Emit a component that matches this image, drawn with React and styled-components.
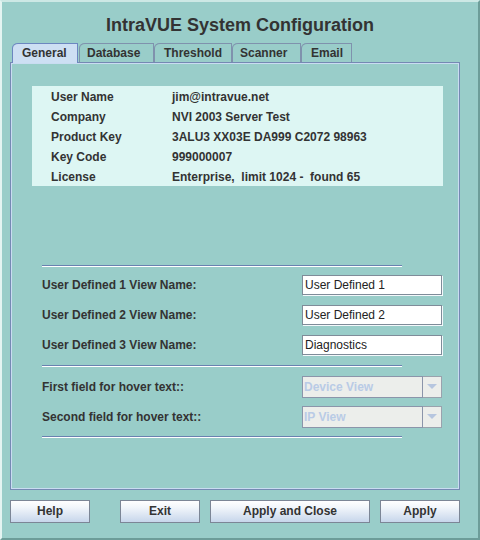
import styled, { createGlobalStyle } from "styled-components";

const GlobalStyle = createGlobalStyle`
  html, body {
    margin: 0;
    padding: 0;
    background: #99cdc9;
  }
  * {
    box-sizing: border-box;
  }
`;

const Frame = styled.div`
  width: 480px;
  height: 540px;
  background: #99cdc9;
  border-top: 2px solid #cde8e5;
  border-left: 2px solid #e4f4f2;
  border-right: 2px solid #6d9d99;
  border-bottom: 2px solid #6d9d99;
  padding: 0 18px 0 8px;
  font-family: "Liberation Sans", Arial, sans-serif;
  color: #333333;
  display: flex;
  flex-direction: column;
`;

const Title = styled.h1`
  margin: 0;
  height: 41px;
  padding-top: 12px;
  font-size: 18px;
  line-height: 22px;
  font-weight: bold;
  text-align: center;
  padding-left: 10px;
`;

const TabRow = styled.div`
  display: flex;
  height: 19px;
  padding-left: 2px;
  position: relative;
  z-index: 1;
`;

const Tab = styled.div`
  width: ${(p) => p.w}px;
  height: ${(p) => (p.active ? 20 : 19)}px;
  margin-right: ${(p) => p.gap || 0}px;
  border: 1px solid ${(p) => (p.active ? "#6c87c0" : "#7f92ad")};
  border-bottom: none;
  border-top-left-radius: 6px 5px;
  background: ${(p) => (p.active ? "#cddff3" : "#99cdc9")};
  font-size: 12px;
  font-weight: bold;
  line-height: 18px;
  padding-left: ${(p) => p.pad}px;
  white-space: nowrap;
`;

const Panel = styled.div`
  width: 450px;
  height: 428px;
  border: 1px solid #7589b3;
  box-shadow: inset 0 0 0 1px #c9dcf1;
  padding: 23px 16px 0 21px;
  display: flex;
  flex-direction: column;
`;

const InfoBox = styled.div`
  width: 411px;
  height: 100px;
  background: #ddf6f3;
  padding: 2px 0 0 19px;
`;

const InfoRow = styled.div`
  display: flex;
  height: 20px;
  line-height: 19px;
  font-size: 12px;
  font-weight: bold;
  white-space: pre;
`;

const InfoLabel = styled.span`
  width: 121px;
`;

const Form = styled.div`
  margin-top: 79px;
  margin-left: 10px;
  width: 400px;
  display: flex;
  flex-direction: column;
`;

const Separator = styled.div`
  width: 360px;
  height: 2px;
  border-top: 1px solid #6a82b0;
  border-bottom: 1px solid #ffffff;
  margin-top: ${(p) => p.top}px;
  margin-bottom: ${(p) => p.bottom}px;
`;

const FieldRow = styled.div`
  display: flex;
  align-items: center;
  justify-content: space-between;
  height: ${(p) => p.h}px;
  margin-bottom: ${(p) => p.gap}px;
  font-size: 12px;
  font-weight: bold;
`;

const TextField = styled.div`
  width: 140px;
  height: 20px;
  background: #ffffff;
  border: 1px solid #7f8c99;
  box-shadow: 1px 1px 0 #f4f8fb;
  font-size: 12px;
  font-weight: normal;
  line-height: 18px;
  padding-left: 2px;
  color: #222222;
`;

const Combo = styled.div`
  width: 140px;
  height: 22px;
  display: flex;
  border: 1px solid #9aa2ad;
  background: #eceeeb;
`;

const ComboValue = styled.div`
  flex: 1;
  border: 1px solid #8b95aa;
  margin: -1px 0 -1px -1px;
  color: #b9cbe6;
  font-size: 12px;
  font-weight: bold;
  line-height: 20px;
  padding-left: 1px;
`;

const ComboArrow = styled.div`
  width: 18px;
  display: flex;
  align-items: center;
  justify-content: center;
`;

const ButtonBar = styled.div`
  display: flex;
  margin-top: 10px;
`;

const Button = styled.div`
  width: ${(p) => p.w}px;
  height: 23px;
  margin-right: ${(p) => p.gap}px;
  border: 1px solid #7c8696;
  background: linear-gradient(#ffffff 0%, #f2f6fb 30%, #c7d6eb 100%);
  font-size: 12px;
  font-weight: bold;
  line-height: 21px;
  text-align: center;
`;

const info = [
  ["User Name", "jim@intravue.net"],
  ["Company", "NVI 2003 Server Test"],
  ["Product Key", "3ALU3 XX03E DA999 C2072 98963"],
  ["Key Code", "999000007"],
  ["License", "Enterprise,  limit 1024 -  found 65"],
];

const tabs = [
  { label: "General", w: 66, pad: 9, gap: 1, active: true },
  { label: "Database", w: 75, pad: 7, gap: 0 },
  { label: "Threshold", w: 78, pad: 9, gap: 0 },
  { label: "Scanner", w: 69, pad: 7, gap: 0 },
  { label: "Email", w: 51, pad: 9, gap: 0 },
];

function Arrow() {
  return (
    <svg width="10" height="6" viewBox="0 0 10 6">
      <path d="M0 0 H10 L5 5 Z" fill="#b6c6df" />
    </svg>
  );
}

export default function App() {
  return (
    <>
      <GlobalStyle />
      <Frame>
        <Title>IntraVUE System Configuration</Title>
        <TabRow>
          {tabs.map((t) => (
            <Tab key={t.label} w={t.w} pad={t.pad} gap={t.gap} active={t.active}>
              {t.label}
            </Tab>
          ))}
        </TabRow>
        <Panel>
          <InfoBox>
            {info.map(([k, v]) => (
              <InfoRow key={k}>
                <InfoLabel>{k}</InfoLabel>
                <span>{v}</span>
              </InfoRow>
            ))}
          </InfoBox>
          <Form>
            <Separator top={0} bottom={8} />
            <FieldRow h={20} gap={10}>
              User Defined 1 View Name:
              <TextField>User Defined 1</TextField>
            </FieldRow>
            <FieldRow h={20} gap={10}>
              User Defined 2 View Name:
              <TextField>User Defined 2</TextField>
            </FieldRow>
            <FieldRow h={20} gap={0}>
              User Defined 3 View Name:
              <TextField>Diagnostics</TextField>
            </FieldRow>
            <Separator top={10} bottom={9} />
            <FieldRow h={22} gap={8}>
              First field for hover text::
              <Combo>
                <ComboValue>Device View</ComboValue>
                <ComboArrow>
                  <Arrow />
                </ComboArrow>
              </Combo>
            </FieldRow>
            <FieldRow h={22} gap={0}>
              Second field for hover text::
              <Combo>
                <ComboValue>IP View</ComboValue>
                <ComboArrow>
                  <Arrow />
                </ComboArrow>
              </Combo>
            </FieldRow>
            <Separator top={8} bottom={0} />
          </Form>
        </Panel>
        <ButtonBar>
          <Button w={80} gap={30}>Help</Button>
          <Button w={80} gap={10}>Exit</Button>
          <Button w={160} gap={10}>Apply and Close</Button>
          <Button w={80} gap={0}>Apply</Button>
        </ButtonBar>
      </Frame>
    </>
  );
}
